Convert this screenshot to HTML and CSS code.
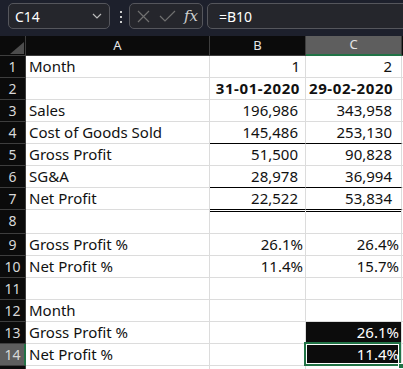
FILE: index.html
```html
<!DOCTYPE html>
<html lang="en">
<head>
  <meta charset="UTF-8">
  <title>Sheet</title>
  <link rel="stylesheet" href="styles.css">
</head>
<body>

<div class="topbar">
  <div class="namebox">
    <span>C14</span>
    <svg width="10" height="6" viewBox="0 0 10 6"><path d="M1 1l4 4 4-4" fill="none" stroke="#bbb" stroke-width="1.2"/></svg>
  </div>
  <div class="dots"><i></i><i></i><i></i></div>
  <div class="fxbtns">
    <svg width="13" height="13" viewBox="0 0 13 13"><path d="M1 1l11 11M12 1L1 12" stroke="#707070" stroke-width="1.2"/></svg>
    <svg width="17" height="13" viewBox="0 0 17 13"><path d="M1 6l5 5L16 1" fill="none" stroke="#707070" stroke-width="1.2"/></svg>
    <span class="fx">fx</span>
  </div>
  <div class="formula">=B10</div>
</div>

<div class="sheet">
  <div class="row head">
    <div class="corner"><svg width="14" height="12" viewBox="0 0 14 12"><path d="M14 0V12H0z" fill="#4d4d4d"/></svg></div>
    <div class="ch">A</div><div class="ch">B</div><div class="ch sel">C</div><div class="ch"></div>
  </div>
  <div class="row">
    <div class="rh">1</div><div class="c">Month</div><div class="c r gen">1</div><div class="c r gen cc">2</div><div class="c"></div>
  </div>
  <div class="row">
    <div class="rh">2</div><div class="c"></div><div class="c r gen bold">31-01-2020</div><div class="c r gen cc bold">29-02-2020</div><div class="c"></div>
  </div>
  <div class="row">
    <div class="rh">3</div><div class="c">Sales</div><div class="c r num">196,986</div><div class="c r num cc">343,958</div><div class="c"></div>
  </div>
  <div class="row">
    <div class="rh">4</div><div class="c">Cost of Goods Sold</div><div class="c r num line">145,486</div><div class="c r num cc line">253,130</div><div class="c"></div>
  </div>
  <div class="row">
    <div class="rh">5</div><div class="c">Gross Profit</div><div class="c r num">51,500</div><div class="c r num cc">90,828</div><div class="c"></div>
  </div>
  <div class="row">
    <div class="rh">6</div><div class="c">SG&amp;A</div><div class="c r num line">28,978</div><div class="c r num cc line">36,994</div><div class="c"></div>
  </div>
  <div class="row">
    <div class="rh">7</div><div class="c">Net Profit</div><div class="c r num line">22,522</div><div class="c r num cc line">53,834</div><div class="c"></div>
  </div>
  <div class="row tall">
    <div class="rh">8</div><div class="c"></div><div class="c dbl"></div><div class="c dbl"></div><div class="c"></div>
  </div>
  <div class="row">
    <div class="rh">9</div><div class="c">Gross Profit %</div><div class="c r pct">26.1%</div><div class="c r pct">26.4%</div><div class="c"></div>
  </div>
  <div class="row">
    <div class="rh">10</div><div class="c">Net Profit %</div><div class="c r pct">11.4%</div><div class="c r pct">15.7%</div><div class="c"></div>
  </div>
  <div class="row">
    <div class="rh">11</div><div class="c"></div><div class="c"></div><div class="c"></div><div class="c"></div>
  </div>
  <div class="row">
    <div class="rh">12</div><div class="c">Month</div><div class="c"></div><div class="c"></div><div class="c"></div>
  </div>
  <div class="row">
    <div class="rh">13</div><div class="c">Gross Profit %</div><div class="c"></div><div class="c r pct dark">26.1%</div><div class="c"></div>
  </div>
  <div class="row">
    <div class="rh sel">14</div><div class="c">Net Profit %</div><div class="c"></div><div class="c r pct dark active">11.4%</div><div class="c"></div>
  </div>
  <div class="row last">
    <div class="rh"></div><div class="c"></div><div class="c"></div><div class="c"></div><div class="c"></div>
  </div>
</div>

</body>
</html>
```

FILE: styles.css
```css
body {
  margin: 0;
  width: 403px;
  height: 369px;
  overflow: hidden;
  background-color: #fff;
  font-family: "Noto Sans", "Open Sans", sans-serif;
}
.topbar {
  display: flex;
  align-items: flex-start;
  height: 36px;
  padding: 3px 0 0 8px;
  box-sizing: border-box;
  background-color: #1d202c;
  white-space: nowrap;
}
.namebox {
  display: flex;
  align-items: center;
  justify-content: space-between;
  width: 102px;
  height: 26px;
  box-sizing: border-box;
  padding: 0 7px 0 6px;
  border: 1px solid #55565c;
  border-radius: 5px;
  background-color: #25262c;
  color: #fff;
  font-size: 14px;
}
.dots {
  display: flex;
  flex-direction: column;
  gap: 3px;
  margin: 8px 7px 0 10px;
}
.dots i {
  display: block;
  width: 2px;
  height: 2px;
  background-color: #ccc;
}
.fxbtns {
  display: flex;
  align-items: center;
  gap: 9px;
  width: 74px;
  height: 26px;
  box-sizing: border-box;
  padding: 0 0 0 7px;
  border: 1px solid #55565c;
  border-radius: 5px;
  background-color: #25262c;
}
.fx {
  font-family: "DejaVu Serif", "Liberation Serif", serif;
  font-style: italic;
  font-size: 15px;
  color: #d0d0d0;
  margin-left: -1px;
}
.formula {
  flex: 1;
  height: 26px;
  box-sizing: border-box;
  margin-left: 4px;
  margin-right: -10px;
  padding: 3px 11px;
  border: 1px solid #55565c;
  border-radius: 5px;
  background-color: #25262c;
  color: #fff;
  font-size: 14px;
}
.row {
  display: grid;
  grid-template-columns: 26px 184px 96px 96px 20px;
  height: 22px;
}
.row.head { height: 20px; }
.row.tall { height: 24px; }
.row.last { height: 4px; }
.row > div {
  box-sizing: border-box;
  border-right: 1px solid #dcdcdc;
  border-bottom: 1px solid #dcdcdc;
  overflow: hidden;
  white-space: nowrap;
}
.row.head > div {
  background-color: #0b0b0b;
  color: #e6e6e6;
  font-size: 13px;
  text-align: center;
  line-height: 18px;
  border-color: #3e3e3e;
}
.row.head > .corner {
  display: flex;
  align-items: flex-end;
  justify-content: flex-end;
  padding: 0 1px 1px 0;
}
.row.head > .ch.sel {
  background-color: #5e5e5e;
  border-bottom: 2px solid #217346;
  line-height: 17px;
}
.row > .rh {
  background-color: #0b0b0b;
  color: #d8d8d8;
  border-color: #3e3e3e;
  font-size: 14px;
  text-align: center;
  line-height: 21px;
}
.row > .rh.sel {
  background-color: #5e5e5e;
  border-right: 2px solid #217346;
  padding-left: 1px;
}
.c {
  padding: 0 3px;
  font-size: 15px;
  line-height: 21px;
  color: #111;
}
.tall .c { line-height: 23px; }
.c.r { text-align: right; }
.c.gen { padding-right: 5px; }
.c.gen.cc { padding-right: 9px; }
.c.num { padding-right: 7px; }
.c.num.cc { padding-right: 9px; }
.c.pct { padding-right: 2px; }
.bold {
  font-weight: bold;
  letter-spacing: 0.6px;
}
.row > .c.line { border-bottom-color: #000; }
.c.dbl {
  background: linear-gradient(#fff 1px, #000 1px, #000 2px, #fff 2px);
}
.c.dark {
  background-color: #0c0c0c;
  color: #fff;
}
.c.active {
  position: relative;
  overflow: visible;
}
.c.active::after {
  content: "";
  position: absolute;
  top: -2px;
  left: -2px;
  right: 0;
  bottom: -1px;
  border: 2px solid #217346;
  box-shadow: inset 0 0 0 1px #fff;
}
.c.active::before {
  content: "";
  position: absolute;
  right: -3px;
  bottom: -4px;
  width: 4px;
  height: 4px;
  background-color: #217346;
  border: 1px solid #fff;
  z-index: 1;
}
```
